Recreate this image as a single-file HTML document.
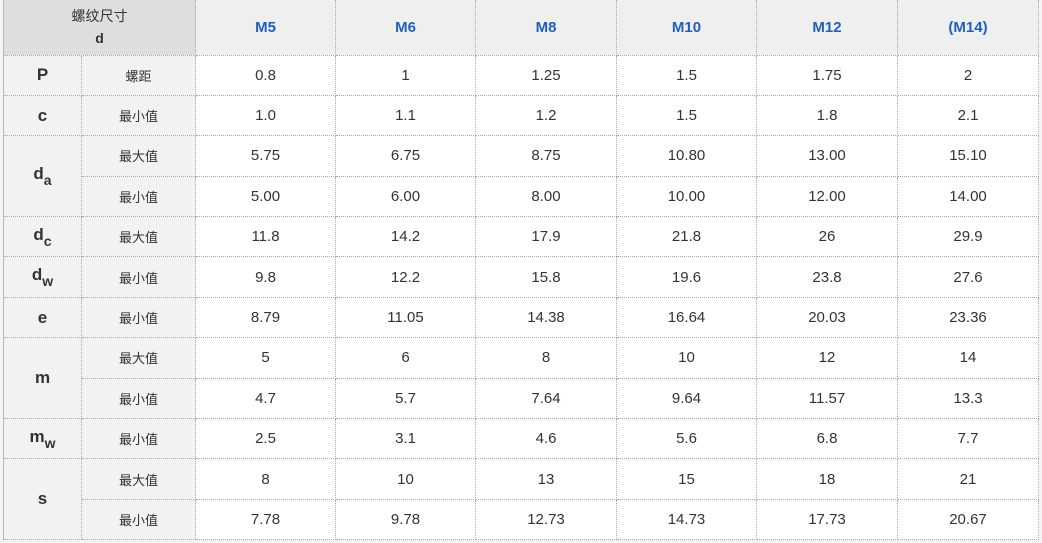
<!DOCTYPE html>
<html><head><meta charset="utf-8"><style>
html,body{margin:0;padding:0;background:#fff;width:1042px;height:543px;overflow:hidden}
body{background:#f4f4f4}
table{position:absolute;left:3px;top:0;border-collapse:collapse;table-layout:fixed;width:1035px;background:#fff;font-family:"Liberation Sans","Noto Sans CJK SC",sans-serif;color:#333}
td,th{border:1px dotted #aaa;text-align:center;padding:0;font-size:15px;font-weight:normal}
tr{height:40.4px}
tr.h{height:55px}
th.corner{background:#dedede;font-size:14px;line-height:22px;border-left:1px solid #bbb;border-top:none}
th.m{background:#efefef;color:#1f5fbf;font-weight:bold;font-size:15px;border-top:none}
td.k{background:#f2f2f2;font-weight:bold;font-size:17px;border-left:1px solid #bbb}
td.k sub{font-size:14px;vertical-align:-6px}
td.l{background:#f2f2f2;font-size:13px}
</style></head><body>
<table>
<colgroup><col style="width:78px"><col style="width:114px"><col style="width:140px"><col style="width:140px"><col style="width:141px"><col style="width:140px"><col style="width:141px"><col style="width:141px"></colgroup>
<tr class="h"><th class="corner" colspan="2">螺纹尺寸<br><b>d</b></th><th class="m">M5</th><th class="m">M6</th><th class="m">M8</th><th class="m">M10</th><th class="m">M12</th><th class="m">(M14)</th></tr>
<tr><td class="k">P</td><td class="l">螺距</td><td>0.8</td><td>1</td><td>1.25</td><td>1.5</td><td>1.75</td><td>2</td></tr>
<tr><td class="k">c</td><td class="l">最小值</td><td>1.0</td><td>1.1</td><td>1.2</td><td>1.5</td><td>1.8</td><td>2.1</td></tr>
<tr><td class="k" rowspan="2">d<sub>a</sub></td><td class="l">最大值</td><td>5.75</td><td>6.75</td><td>8.75</td><td>10.80</td><td>13.00</td><td>15.10</td></tr>
<tr><td class="l">最小值</td><td>5.00</td><td>6.00</td><td>8.00</td><td>10.00</td><td>12.00</td><td>14.00</td></tr>
<tr><td class="k">d<sub>c</sub></td><td class="l">最大值</td><td>11.8</td><td>14.2</td><td>17.9</td><td>21.8</td><td>26</td><td>29.9</td></tr>
<tr><td class="k">d<sub>w</sub></td><td class="l">最小值</td><td>9.8</td><td>12.2</td><td>15.8</td><td>19.6</td><td>23.8</td><td>27.6</td></tr>
<tr><td class="k">e</td><td class="l">最小值</td><td>8.79</td><td>11.05</td><td>14.38</td><td>16.64</td><td>20.03</td><td>23.36</td></tr>
<tr><td class="k" rowspan="2">m</td><td class="l">最大值</td><td>5</td><td>6</td><td>8</td><td>10</td><td>12</td><td>14</td></tr>
<tr><td class="l">最小值</td><td>4.7</td><td>5.7</td><td>7.64</td><td>9.64</td><td>11.57</td><td>13.3</td></tr>
<tr><td class="k">m<sub>w</sub></td><td class="l">最小值</td><td>2.5</td><td>3.1</td><td>4.6</td><td>5.6</td><td>6.8</td><td>7.7</td></tr>
<tr><td class="k" rowspan="2">s</td><td class="l">最大值</td><td>8</td><td>10</td><td>13</td><td>15</td><td>18</td><td>21</td></tr>
<tr><td class="l">最小值</td><td>7.78</td><td>9.78</td><td>12.73</td><td>14.73</td><td>17.73</td><td>20.67</td></tr>
</table>
</body></html>
